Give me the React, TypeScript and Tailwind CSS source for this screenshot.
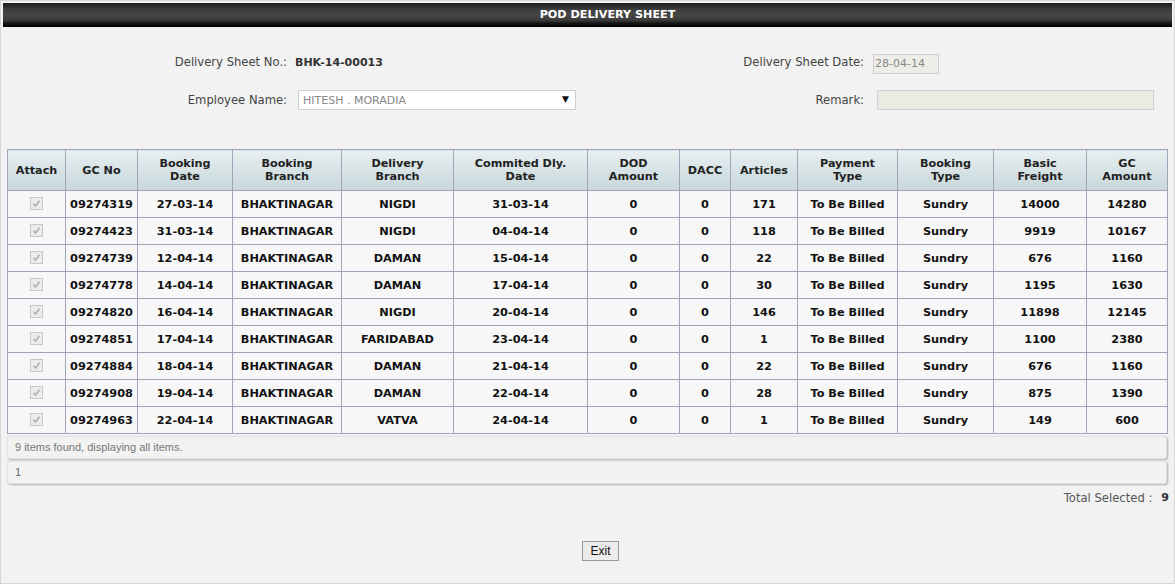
import React from "react";

const rows = [
  ["09274319", "27-03-14", "BHAKTINAGAR", "NIGDI", "31-03-14", "0", "0", "171", "To Be Billed", "Sundry", "14000", "14280"],
  ["09274423", "31-03-14", "BHAKTINAGAR", "NIGDI", "04-04-14", "0", "0", "118", "To Be Billed", "Sundry", "9919", "10167"],
  ["09274739", "12-04-14", "BHAKTINAGAR", "DAMAN", "15-04-14", "0", "0", "22", "To Be Billed", "Sundry", "676", "1160"],
  ["09274778", "14-04-14", "BHAKTINAGAR", "DAMAN", "17-04-14", "0", "0", "30", "To Be Billed", "Sundry", "1195", "1630"],
  ["09274820", "16-04-14", "BHAKTINAGAR", "NIGDI", "20-04-14", "0", "0", "146", "To Be Billed", "Sundry", "11898", "12145"],
  ["09274851", "17-04-14", "BHAKTINAGAR", "FARIDABAD", "23-04-14", "0", "0", "1", "To Be Billed", "Sundry", "1100", "2380"],
  ["09274884", "18-04-14", "BHAKTINAGAR", "DAMAN", "21-04-14", "0", "0", "22", "To Be Billed", "Sundry", "676", "1160"],
  ["09274908", "19-04-14", "BHAKTINAGAR", "DAMAN", "22-04-14", "0", "0", "28", "To Be Billed", "Sundry", "875", "1390"],
  ["09274963", "22-04-14", "BHAKTINAGAR", "VATVA", "24-04-14", "0", "0", "1", "To Be Billed", "Sundry", "149", "600"],
];

const headers: [string, string | null][] = [
  ["Attach", null],
  ["GC No", null],
  ["Booking", "Date"],
  ["Booking", "Branch"],
  ["Delivery", "Branch"],
  ["Commited Dly.", "Date"],
  ["DOD", "Amount"],
  ["DACC", null],
  ["Articles", null],
  ["Payment", "Type"],
  ["Booking", "Type"],
  ["Basic", "Freight"],
  ["GC", "Amount"],
];

const widths = [58, 72, 95, 109, 112, 134, 92, 51, 67, 100, 96, 93, 81];

function Check() {
  return (
    <span className="inline-flex w-[13px] h-[13px] border border-[#c8c8c8] bg-[#ececec] items-center justify-center align-middle">
      <svg width="9" height="9" viewBox="0 0 9 9">
        <path d="M1.5 4.8 L3.5 7 L7.6 1.8" stroke="#b0b0b0" strokeWidth="1.6" fill="none" />
      </svg>
    </span>
  );
}

export default function App() {
  return (
    <div
      className="w-[1175px] h-[584px] bg-[#f2f2f2] border border-[#d6d6d6] p-[2px] text-[11px] text-[#444]"
      style={{ fontFamily: "'DejaVu Sans', Verdana, sans-serif" }}
    >
      <div className="h-[24px] flex items-center justify-center pl-[40px] bg-[linear-gradient(#1e1e1e,#3c3c3c_25%,#474747_50%,#3a3a3a_72%,#141414_85%,#000)] text-white font-bold text-[11.2px]">
        POD DELIVERY SHEET
      </div>

      <div className="mt-[26px] flex items-center h-[20px] text-[11.6px]">
        <div className="w-[284px] text-right">Delivery Sheet No.:</div>
        <div className="w-[577px] flex justify-between items-center">
          <span className="pl-[8px] font-bold text-[#333] text-[11px]">BHK-14-00013</span>
          <span>Delivery Sheet Date:</span>
        </div>
        <div className="pl-[9px] pt-[2px]">
          <div className="w-[66px] h-[20px] border border-[#cfcfcf] bg-[#eeede8] text-[#888] text-[11px] flex items-center pl-[1px]">
            28-04-14
          </div>
        </div>
      </div>

      <div className="mt-[17px] flex items-center h-[20px] text-[11.6px]">
        <div className="w-[284px] text-right pt-[2px]">Employee Name:</div>
        <div className="w-[577px] flex justify-between items-center">
          <div className="ml-[11px] w-[278px] h-[20px] border border-[#cfcfcf] bg-white text-[#888] text-[11px] flex items-center justify-between pl-[4px] pr-[6px]">
            <span className="mt-[2px]">HITESH . MORADIA</span>
            <span className="text-[9px] text-[#111]">▼</span>
          </div>
          <span className="pt-[2px]">Remark:</span>
        </div>
        <div className="pl-[13px]">
          <div className="w-[277px] h-[20px] border border-[#cfcfcf] bg-[#ebebe4]" />
        </div>
      </div>

      <div className="mt-[39px] px-[4px]">
        <table className="w-[1160px] table-fixed border-collapse text-[11px]">
          <colgroup>
            {widths.map((w, i) => (
              <col key={i} style={{ width: w }} />
            ))}
          </colgroup>
          <thead>
            <tr className="h-[41px]">
              {headers.map(([a, b], i) => (
                <th
                  key={i}
                  className="border border-[#a3a2b8] bg-[linear-gradient(#e8eff0,#d3e0e3_60%,#c9d8dc)] text-[#222] font-bold text-center leading-[13px] p-0 text-[11.2px]"
                >
                  {a}
                  {b && <br />}
                  {b}
                </th>
              ))}
            </tr>
          </thead>
          <tbody>
            {rows.map((r, ri) => (
              <tr key={ri} className="h-[27px]">
                <td className="border border-[#a3a2b8] bg-[#f7f7f7] text-center p-0">
                  <Check />
                </td>
                {r.map((c, ci) => (
                  <td
                    key={ci}
                    className="border border-[#a3a2b8] bg-[#f7f7f7] text-center font-bold text-[#111] px-0 pt-[2px] pb-0 text-[11.3px]"
                  >
                    {c}
                  </td>
                ))}
              </tr>
            ))}
          </tbody>
        </table>

        <div
          className="mt-[2px] w-[1160px] h-[23px] rounded-[3px] border border-[#e2e2e2] shadow-[1px_1px_2px_rgba(0,0,0,0.28)] bg-[#f2f2f2] flex items-center pl-[7px] text-[#777] text-[11px]"
          style={{ fontFamily: "'Liberation Sans', Arial, sans-serif" }}
        >
          9 items found, displaying all items.
        </div>
        <div
          className="mt-[2px] w-[1160px] h-[23px] rounded-[3px] border border-[#e2e2e2] shadow-[1px_1px_2px_rgba(0,0,0,0.28)] bg-[#f2f2f2] flex items-center pl-[7px] text-[#666] text-[11px]"
          style={{ fontFamily: "'Liberation Sans', Arial, sans-serif" }}
        >
          1
        </div>

        <div className="w-[1162px] mt-[6px] flex justify-end items-center text-[#555] text-[11.6px]">
          <span>Total Selected :</span>
          <span className="ml-[9px] font-bold text-[#333] text-[11px]">9</span>
        </div>
      </div>

      <div className="mt-[34px] flex justify-center pl-[26px]">
        <button
          className="w-[37px] h-[20px] border border-[#9a9a9a] bg-[#ececec] text-[#111] text-[12px] flex items-center justify-center"
          style={{ fontFamily: "'Liberation Sans', Arial, sans-serif" }}
        >
          Exit
        </button>
      </div>
    </div>
  );
}
